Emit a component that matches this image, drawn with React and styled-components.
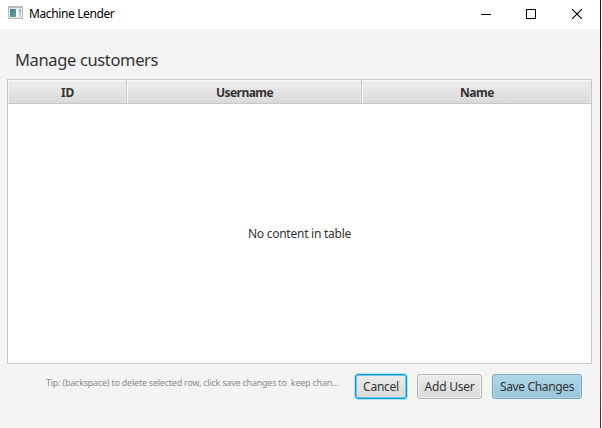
import React from "react";
import styled, { createGlobalStyle } from "styled-components";

const GlobalStyle = createGlobalStyle`
  * { box-sizing: border-box; }
  body { margin: 0; background: #fff; overflow: hidden; }
`;

const Window = styled.div`
  width: 601px;
  height: 428px;
  display: flex;
  flex-direction: column;
  background: #f4f4f4;
  border-right: 1px solid;
  border-image: linear-gradient(#2d1722, #4a2835 50%, #73474b 85%, #4a2835) 1;
  font-family: "Noto Sans", "Open Sans", sans-serif;
  font-size: 12px;
  color: #333;
  white-space: pre;
`;

const TitleBar = styled.header`
  height: 29px;
  flex: none;
  display: flex;
  align-items: flex-start;
  background: #fff;
  color: #000;
`;

const AppIcon = styled.svg`
  margin: 6px 6px 0 8px;
  flex: none;
`;

const Label = styled.span`
  display: inline-block;
  letter-spacing: ${(p) => p.$spacing || 0}px;
`;

const WindowTitle = styled(Label)`
  line-height: 18px;
  margin-top: 5px;
`;

const Controls = styled.div`
  margin-left: auto;
  display: flex;
`;

const ControlButton = styled.button`
  width: ${(p) => p.$width || 46}px;
  height: 27px;
  padding: 0;
  border: 0;
  background: none;
  display: flex;
  align-items: center;
  justify-content: center;
`;

const Heading = styled.h1`
  height: 50px;
  flex: none;
  margin: 0;
  padding: 18px 0 0 15px;
  font-size: 16.5px;
  line-height: 26px;
  font-weight: 400;
`;

const Table = styled.section`
  width: 585px;
  height: 285px;
  flex: none;
  margin-left: 7px;
  display: flex;
  flex-direction: column;
  background: #fff;
  border: 1px solid #c8c8c8;
`;

const TableHeader = styled.div`
  height: 24px;
  flex: none;
  display: grid;
  grid-template-columns: 119px 235px 1fr;
  border-bottom: 1px solid #c8c8c8;
`;

const HeaderCell = styled.div`
  display: flex;
  align-items: center;
  justify-content: center;
  padding: 2px 0 0 1px;
  font-weight: 700;
  background: linear-gradient(#eee, #dadada);
  box-shadow: inset 1px 1px #f7f7f7, inset -1px 0 #e8e8e8;
  border-right: ${(p) => (p.$last ? "0" : "1px solid #c8c8c8")};
`;

const Placeholder = styled.div`
  flex: 1;
  display: flex;
  align-items: center;
  justify-content: center;
  padding-bottom: 1px;
`;

const Footer = styled.footer`
  display: flex;
  padding: 10px 0 0 46px;
`;

const Tip = styled.div`
  width: 309px;
  font-size: 9px;
  line-height: 14px;
  padding-top: 2px;
  color: #8c8c8c;
`;

const Actions = styled.div`
  display: flex;
  gap: 10px;
`;

const tones = {
  normal: "border-color: #b5b5b5; background: linear-gradient(#ececec, #dadada); box-shadow: inset 0 0 0 1px #f0f0f0;",
  focused: "border-color: #039ed3; background: linear-gradient(#ececec, #dadada); box-shadow: 0 0 0 1px #b5e0ef, inset 0 0 0 1px #72c5e2;",
  primary: "border-color: #7ea6b6; background: linear-gradient(#add8e9, #9bc5d8); box-shadow: inset 0 0 0 1px #b0d8e9;",
};

const ActionButton = styled.button`
  width: ${(p) => p.$width}px;
  height: 25px;
  padding: 0;
  display: flex;
  align-items: center;
  justify-content: center;
  border: 1px solid;
  border-radius: 3px;
  font: inherit;
  color: #333;
  white-space: pre;
  ${(p) => tones[p.$tone]}
`;

export default function App() {
  return (
    <>
      <GlobalStyle />
      <Window>
        <TitleBar>
          <AppIcon width="15" height="13" viewBox="0 0 15 13" shapeRendering="crispEdges">
            <defs>
              <linearGradient id="pane" x1="0" y1="0" x2="1" y2="1">
                <stop offset="0" stopColor="#4876a0" />
                <stop offset="1" stopColor="#5ab287" />
              </linearGradient>
              <linearGradient id="side" x1="0" y1="0" x2="0" y2="1">
                <stop offset="0" stopColor="#8fc4b4" />
                <stop offset="1" stopColor="#dde6ee" />
              </linearGradient>
            </defs>
            <rect width="15" height="13" fill="#b9bcbe" />
            <rect x="1" y="2" width="13" height="10" fill="#e6e8e9" />
            <rect x="2" y="3" width="6" height="8" fill="url(#pane)" />
            <rect x="8" y="3" width="2" height="8" fill="#fafafa" />
            <rect x="11" y="3" width="2" height="8" fill="url(#side)" />
          </AppIcon>
          <WindowTitle $spacing={-0.38}>Machine Lender</WindowTitle>
          <Controls>
            <ControlButton aria-label="Minimize">
              <svg width="10" height="10" shapeRendering="crispEdges"><rect y="5" width="10" height="1" /></svg>
            </ControlButton>
            <ControlButton aria-label="Maximize" $width={44}>
              <svg width="10" height="10" shapeRendering="crispEdges"><path d="M.5.5h9v9h-9z" fill="none" stroke="#000" /></svg>
            </ControlButton>
            <ControlButton aria-label="Close" $width={47}>
              <svg width="10" height="10"><path d="M0 0l10 10M10 0L0 10" fill="none" stroke="#000" strokeWidth="1.1" /></svg>
            </ControlButton>
          </Controls>
        </TitleBar>
        <Heading><Label $spacing={-0.36}>Manage customers</Label></Heading>
        <Table>
          <TableHeader>
            <HeaderCell><Label $spacing={-0.2}>ID</Label></HeaderCell>
            <HeaderCell><Label $spacing={-0.55}>Username</Label></HeaderCell>
            <HeaderCell $last><Label $spacing={-0.5}>Name</Label></HeaderCell>
          </TableHeader>
          <Placeholder><Label $spacing={-0.25}>No content in table</Label></Placeholder>
        </Table>
        <Footer>
          <Tip><Label $spacing={-0.23}>Tip: (backspace) to delete selected row, click save changes to  keep chan...</Label></Tip>
          <Actions>
            <ActionButton $width={52} $tone="focused"><Label $spacing={-0.25}>Cancel</Label></ActionButton>
            <ActionButton $width={65} $tone="normal"><Label $spacing={-0.25}>Add User</Label></ActionButton>
            <ActionButton $width={90} $tone="primary"><Label $spacing={-0.35}>Save Changes</Label></ActionButton>
          </Actions>
        </Footer>
      </Window>
    </>
  );
}
